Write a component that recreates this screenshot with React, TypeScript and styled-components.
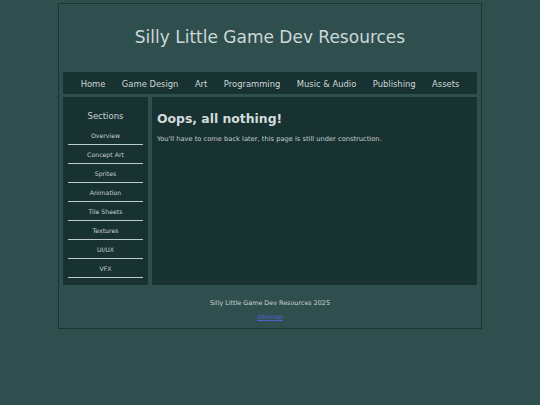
import React from "react";
import styled, { createGlobalStyle } from "styled-components";

const GlobalStyle = createGlobalStyle`
  html, body {
    margin: 0;
    padding: 0;
    background: #2f4f4f;
    font-family: "DejaVu Sans", Verdana, sans-serif;
  }
`;

const Page = styled.div`
  padding-top: 3px;
`;

const Container = styled.div`
  width: 414px;
  margin: 0 auto;
  border: 1px solid #1b3434;
  padding: 0 4px 6px;
  color: #c8d4d4;
`;

const Header = styled.header`
  height: 68px;
  box-sizing: border-box;
  padding-bottom: 2px;
  display: flex;
  align-items: center;
  justify-content: center;
`;

const Title = styled.h1`
  margin: 0;
  font-size: 17px;
  font-weight: normal;
  color: #ccd8d8;
`;

const NavBar = styled.nav`
  height: 22px;
  box-sizing: border-box;
  padding-top: 1px;
  background: #183131;
  display: flex;
  align-items: center;
  justify-content: center;
  gap: 16.5px;
`;

const NavLink = styled.span`
  font-size: 8.4px;
  color: #d0d9d9;
`;

const Columns = styled.div`
  margin-top: 3px;
  height: 188px;
  display: flex;
  gap: 4px;
`;

const Sidebar = styled.aside`
  width: 75px;
  padding: 0 5px;
  background: #183131;
  display: flex;
  flex-direction: column;
`;

const SidebarHeading = styled.div`
  padding-top: 13px;
  line-height: 12px;
  margin-bottom: 4px;
  text-align: center;
  font-size: 8.5px;
  color: #c8d4d4;
`;

const SidebarItem = styled.div`
  height: 18px;
  display: flex;
  align-items: center;
  justify-content: center;
  border-bottom: 1px solid #bccaca;
  font-size: 6.2px;
  color: #c4d0d0;
`;

const Main = styled.main`
  flex: 1;
  background: #183131;
  padding: 14px 5px 0;
`;

const Heading = styled.h2`
  margin: 0;
  font-size: 12.4px;
  line-height: 15px;
  font-weight: bold;
  color: #d2dcdc;
`;

const Text = styled.p`
  margin: 8.5px 0 0;
  font-size: 6.7px;
  line-height: 8px;
  color: #c4d0d0;
`;

const Footer = styled.footer`
  padding-top: 13.5px;
  display: flex;
  flex-direction: column;
  align-items: center;
  gap: 5.5px;
  font-size: 6.4px;
  line-height: 9px;
`;

const SitemapLink = styled.a`
  color: #5a5ad0;
  text-decoration: underline;
`;

const navItems = [
  "Home",
  "Game Design",
  "Art",
  "Programming",
  "Music & Audio",
  "Publishing",
  "Assets",
];

const sections = [
  "Overview",
  "Concept Art",
  "Sprites",
  "Animation",
  "Tile Sheets",
  "Textures",
  "UI/UX",
  "VFX",
];

const App = () => {
  return (
    <Page>
      <GlobalStyle />
      <Container>
        <Header>
          <Title>Silly Little Game Dev Resources</Title>
        </Header>
        <NavBar>
          {navItems.map((item) => (
            <NavLink key={item}>{item}</NavLink>
          ))}
        </NavBar>
        <Columns>
          <Sidebar>
            <SidebarHeading>Sections</SidebarHeading>
            {sections.map((s) => (
              <SidebarItem key={s}>{s}</SidebarItem>
            ))}
          </Sidebar>
          <Main>
            <Heading>Oops, all nothing!</Heading>
            <Text>
              You'll have to come back later, this page is still under
              construction.
            </Text>
          </Main>
        </Columns>
        <Footer>
          <span>Silly Little Game Dev Resources 2025</span>
          <SitemapLink href="#">sitemap</SitemapLink>
        </Footer>
      </Container>
    </Page>
  );
};

export default App;
